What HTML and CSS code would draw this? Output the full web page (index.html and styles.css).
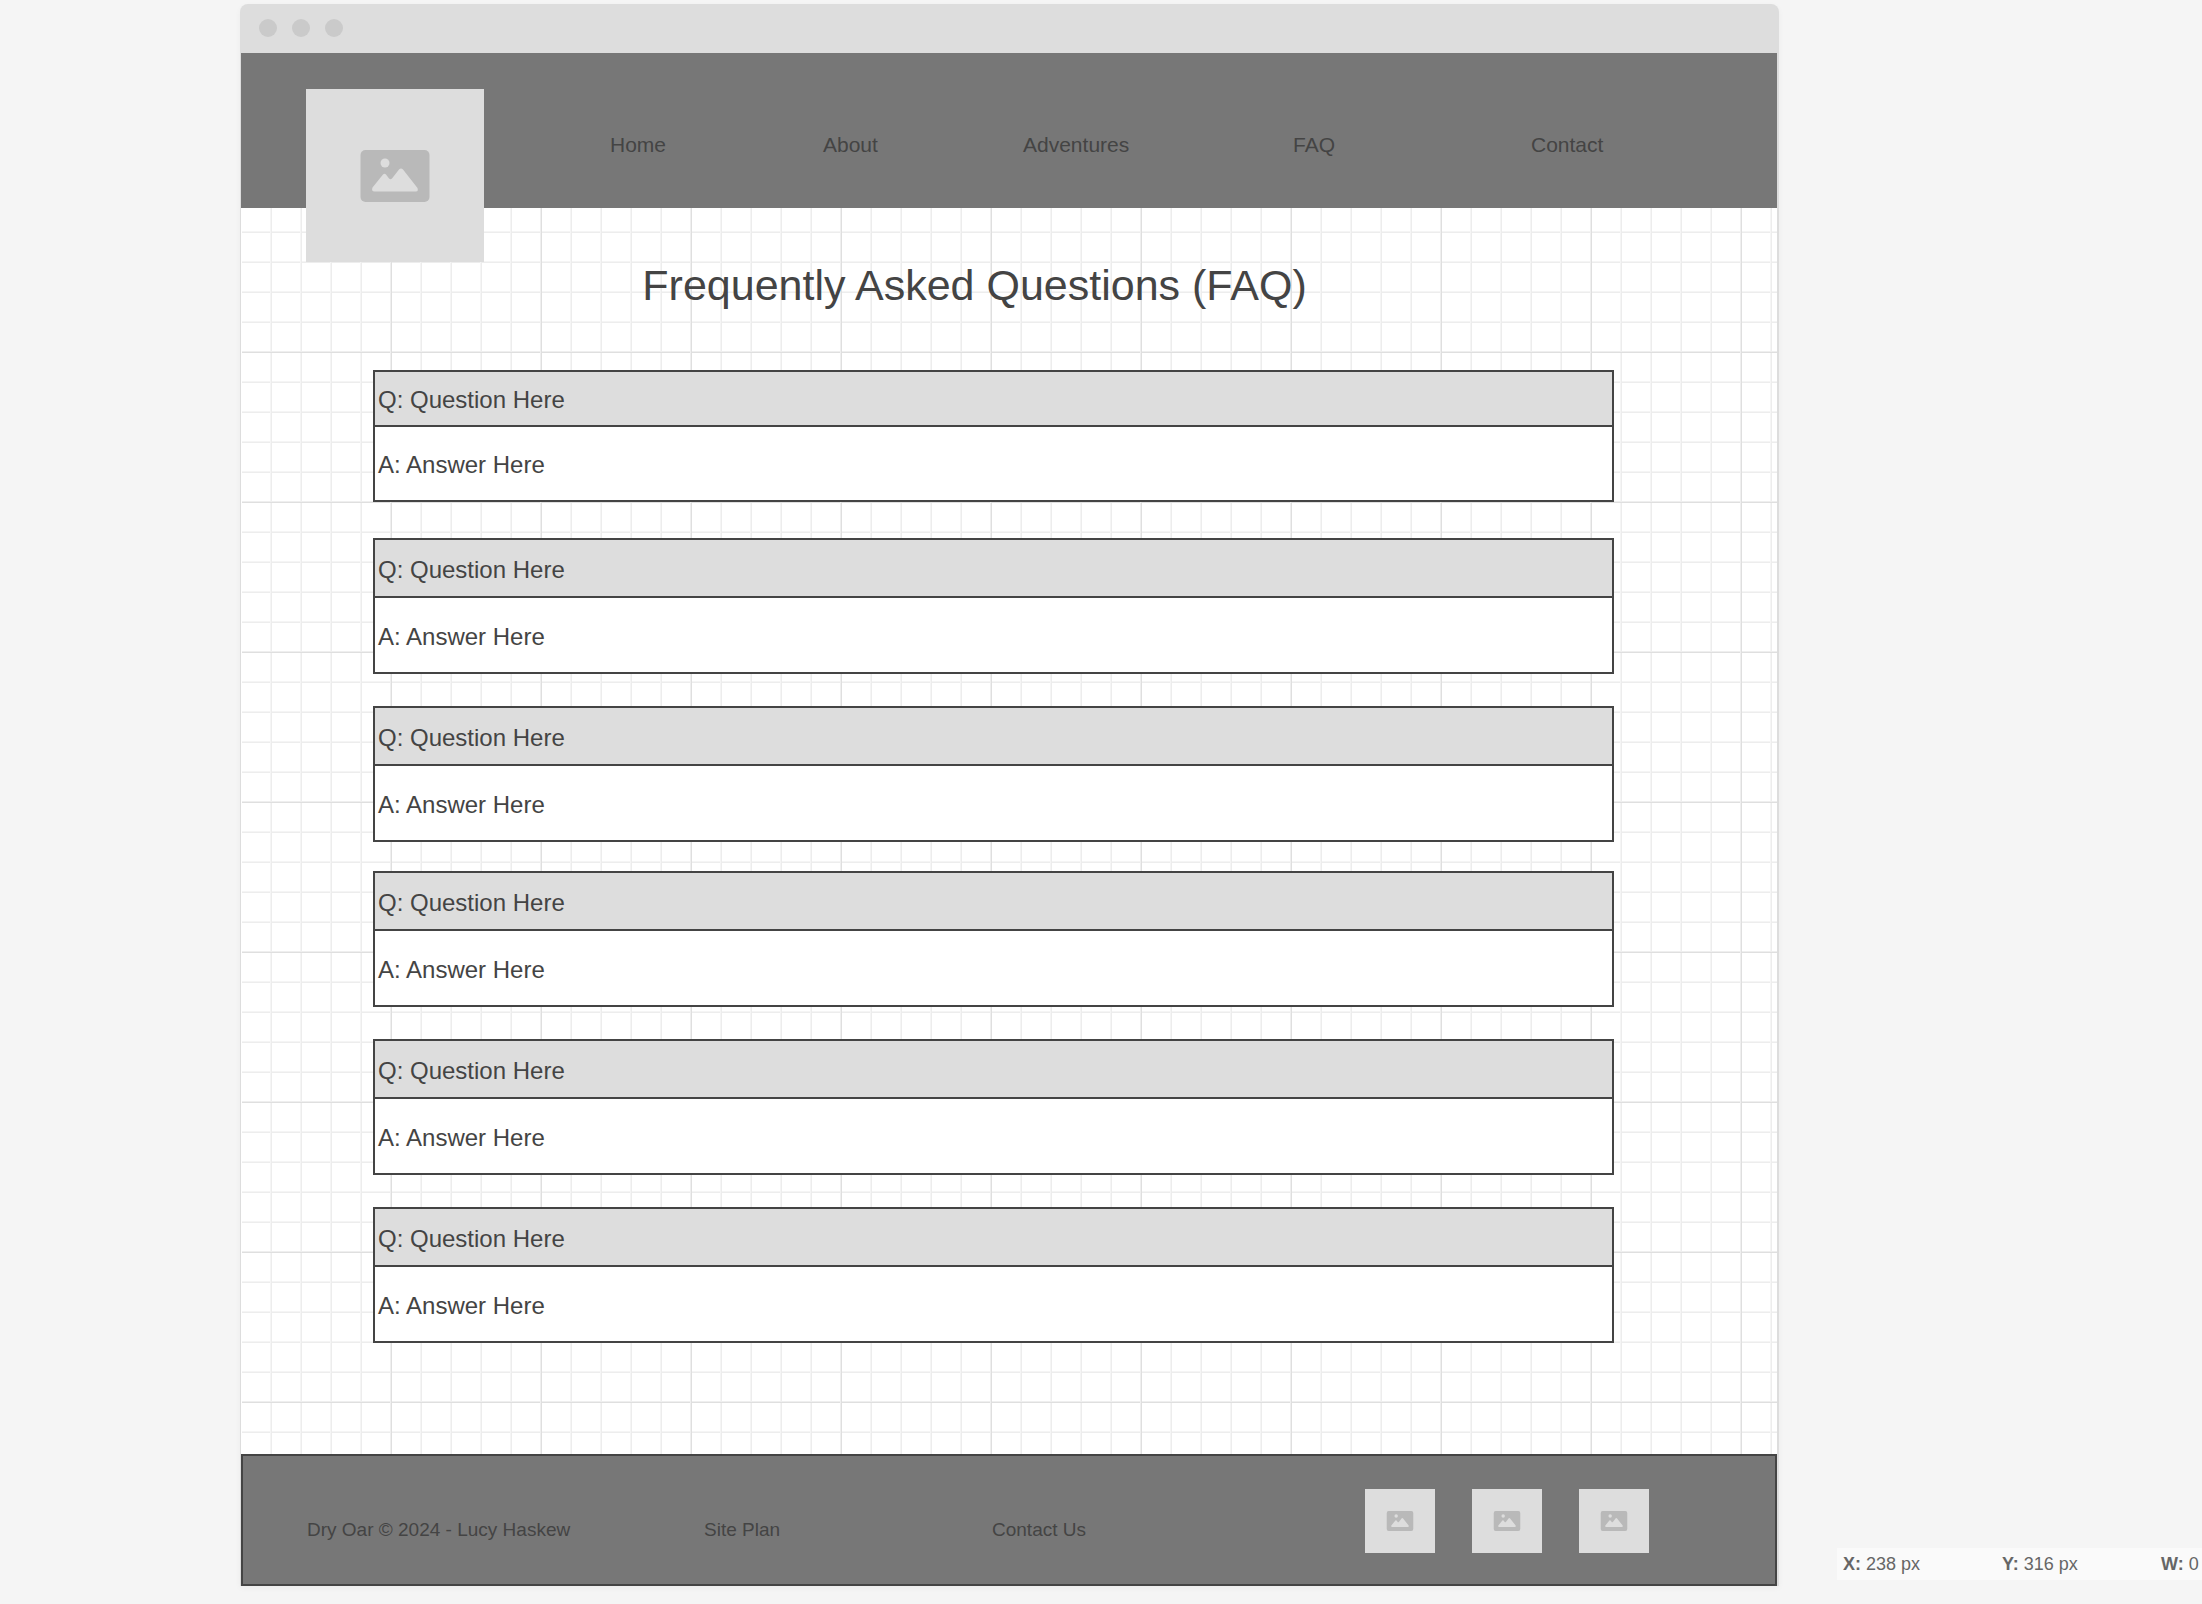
FILE: index.html
```html
<!DOCTYPE html>
<html lang="en">
<head>
<meta charset="utf-8">
<title>Frequently Asked Questions (FAQ)</title>
<link rel="stylesheet" href="styles.css">
</head>
<body>
<svg class="defs" aria-hidden="true">
  <symbol id="picture" viewBox="0 0 69 52">
    <path class="frame" d="M5 0H64a5 5 0 0 1 5 5V47a5 5 0 0 1-5 5H5a5 5 0 0 1-5-5V5a5 5 0 0 1 5-5Z"/>
    <circle class="cutout" cx="24.500" cy="13" r="4.500"/>
    <path class="cutout" d="M14 41.500Q10.500 41.500 12 37.500L22.500 24.500Q24 23 25.500 24.500L28.500 28.500Q30 30 31.500 28.500L38.500 19.500Q40.500 17.500 42.500 19.500L57 38Q58 41.500 55.500 41.500Z"/>
  </symbol>
</svg>
<div class="window">
  <div class="titlebar"><span class="dot"></span><span class="dot"></span><span class="dot"></span></div>
  <header class="header">
    <div class="logo"><svg class="logo-icon"><use href="#picture"/></svg></div>
    <nav class="nav">
      <a href="#">Home</a>
      <a href="#">About</a>
      <a href="#">Adventures</a>
      <a href="#">FAQ</a>
      <a href="#">Contact</a>
    </nav>
  </header>
  <main class="main">
    <h1 class="title">Frequently Asked Questions (FAQ)</h1>
    <div class="faq">
      <div class="faq-group">
        <section class="card compact"><h2>Q: Question Here</h2><p>A: Answer Here</p></section>
        <section class="card"><h2>Q: Question Here</h2><p>A: Answer Here</p></section>
        <section class="card"><h2>Q: Question Here</h2><p>A: Answer Here</p></section>
      </div>
      <div class="faq-group">
        <section class="card"><h2>Q: Question Here</h2><p>A: Answer Here</p></section>
        <section class="card"><h2>Q: Question Here</h2><p>A: Answer Here</p></section>
        <section class="card"><h2>Q: Question Here</h2><p>A: Answer Here</p></section>
      </div>
    </div>
  </main>
  <footer class="footer">
    <div class="footer-links">
      <span>Dry Oar © 2024 - Lucy Haskew</span>
      <a href="#">Site Plan</a>
      <a href="#">Contact Us</a>
    </div>
    <div class="social">
      <div class="thumb"><svg class="thumb-icon"><use href="#picture"/></svg></div>
      <div class="thumb"><svg class="thumb-icon"><use href="#picture"/></svg></div>
      <div class="thumb"><svg class="thumb-icon"><use href="#picture"/></svg></div>
    </div>
  </footer>
</div>
<aside class="status">
  <span><b>X:</b> 238 px</span>
  <span><b>Y:</b> 316 px</span>
  <span><b>W:</b> 0</span>
</aside>
</body>
</html>
```
FILE: styles.css
```css
* {
  box-sizing: border-box;
}

body {
  margin: 0;
  padding: 4px 0 18px;
  display: grid;
  grid-template-columns: 240px minmax(0, 1fr) 423px;
  background: #f5f5f5;
  color: #444;
  font-family: "Liberation Sans", Arial, sans-serif;
}

a {
  color: inherit;
  text-decoration: none;
}

.defs {
  position: absolute;
  width: 0;
  height: 0;
}

.frame {
  fill: #b9b9b9;
}

.cutout {
  fill: #ddd;
}

.window {
  grid-column: 2;
  padding: 0 2px 0 1px;
  border-radius: 8px 8px 0 0;
  background: #ddd;
  box-shadow: 0 2px 6px rgba(0, 0, 0, 0.04);
}

.titlebar {
  display: flex;
  gap: 15px;
  height: 49px;
  padding: 15px 18px;
}

.dot {
  width: 18px;
  height: 18px;
  border-radius: 50%;
  background: #cacaca;
}

.header {
  display: flex;
  align-items: flex-start;
  gap: 126px;
  height: 155px;
  padding: 36px 0 0 65px;
  background: #777;
}

.logo,
.thumb {
  display: flex;
  align-items: center;
  justify-content: center;
  flex: none;
  background: #ddd;
}

.logo {
  position: relative;
  width: 178px;
  height: 173px;
}

.logo-icon {
  width: 70px;
  height: 52px;
}

.nav {
  flex: 1;
  display: grid;
  grid-template-columns: 213fr 200fr 270fr 238fr 246fr;
  padding-top: 44px;
  font-size: 21px;
  line-height: 24px;
}

/* Graph paper: a line every 30px, a stronger one every 150px */
.main {
  padding: 52px 163px 111px 131px;
  border-left: 1px solid #fff;
  background-color: #fff;
  background-image:
    linear-gradient(to right, #efefef 1px, #dfdfdf 1px 2px, transparent 2px),
    linear-gradient(to bottom, #efefef 1px, #dfdfdf 1px 2px, transparent 2px),
    linear-gradient(to right, #f5f5f5 1px, #ededed 1px 2px, transparent 2px),
    linear-gradient(to bottom, #f5f5f5 1px, #ededed 1px 2px, transparent 2px);
  background-size: 150px 150px, 150px 150px, 30px 30px, 30px 30px;
  background-position: 148px 143px, 148px 143px, 28px 23px, 28px 23px;
  background-clip: padding-box;
}

.title {
  margin: 0 0 60px;
  padding-right: 38px;
  text-align: center;
  font-size: 43px;
  font-weight: 400;
  line-height: 50px;
}

.faq {
  display: flex;
  flex-direction: column;
  gap: 29px;
}

.faq-group {
  display: grid;
  grid-auto-rows: minmax(136px, auto);
  align-items: start;
  row-gap: 32px;
}

.card {
  border: 2px solid #444;
  background: #fff;
}

.card h2,
.card p {
  margin: 0;
  padding: 4px 3px 0;
  font-size: 24px;
  font-weight: 400;
}

.card h2 {
  border-bottom: 2px solid #444;
  background: #ddd;
  line-height: 52px;
}

.card p {
  line-height: 70px;
}

.compact h2,
.compact p {
  padding-top: 2px;
}

.compact h2 {
  line-height: 51px;
}

.compact p {
  line-height: 71px;
}

.footer {
  display: flex;
  align-items: flex-start;
  justify-content: space-between;
  padding: 33px 126px 31px 64px;
  border: 2px solid #444;
  background: #777;
}

.footer-links {
  display: grid;
  grid-template-columns: 397px 288px auto;
  padding-top: 30px;
  font-size: 19px;
  line-height: 22px;
}

.social {
  display: flex;
  gap: 37px;
}

.thumb {
  width: 70px;
  height: 64px;
}

.thumb-icon {
  width: 28px;
  height: 20px;
}

.status {
  grid-column: 3;
  align-self: end;
  display: grid;
  grid-template-columns: 159px 159px auto;
  margin: 0 0 6px 58px;
  padding: 0 0 0 6px;
  background: #fafafa;
  color: #666;
  font-size: 18px;
  line-height: 32px;
  white-space: nowrap;
}
```
